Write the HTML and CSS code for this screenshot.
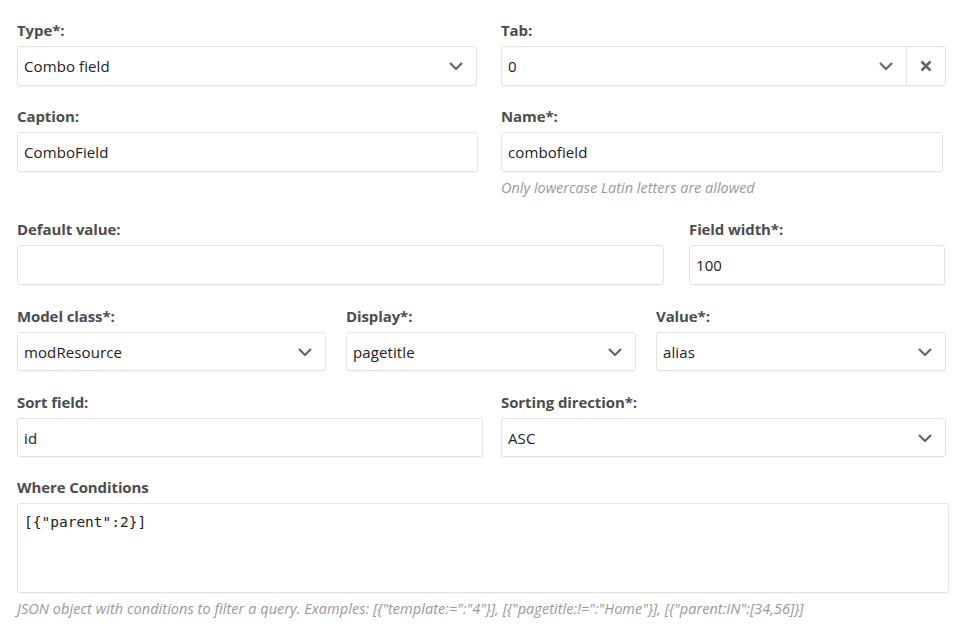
FILE: index.html
```html
<!DOCTYPE html>
<html>
<head>
<meta charset="utf-8">
<link rel="stylesheet" href="styles.css">
</head>
<body>
<div class="form">
  <div class="row row-a">
    <div class="field">
      <div class="label">Type*:</div>
      <div class="box select"><span class="val">Combo field</span><span class="trigger"><svg width="16" height="10" viewBox="0 0 16 10"><path d="M2 2 L8 8 L14 2" fill="none" stroke="#666" stroke-width="2.2"/></svg></span></div>
    </div>
    <div class="field">
      <div class="label">Tab:</div>
      <div class="box select"><span class="val">0</span><span class="trigger"><svg width="16" height="10" viewBox="0 0 16 10"><path d="M2 2 L8 8 L14 2" fill="none" stroke="#666" stroke-width="2.2"/></svg></span><span class="clear"><svg width="12" height="12" viewBox="0 0 12 12"><path d="M1.5 1.5 L10.5 10.5 M10.5 1.5 L1.5 10.5" stroke="#666" stroke-width="2.6"/></svg></span></div>
    </div>
  </div>
  <div class="row row-b">
    <div class="field">
      <div class="label">Caption:</div>
      <div class="box"><span class="val">ComboField</span></div>
    </div>
    <div class="field">
      <div class="label">Name*:</div>
      <div class="box"><span class="val">combofield</span></div>
      <div class="hint">Only lowercase Latin letters are allowed</div>
    </div>
  </div>
  <div class="row row-c">
    <div class="field">
      <div class="label">Default value:</div>
      <div class="box"><span class="val"></span></div>
    </div>
    <div class="field">
      <div class="label">Field width*:</div>
      <div class="box"><span class="val">100</span></div>
    </div>
  </div>
  <div class="row row-d">
    <div class="field">
      <div class="label">Model class*:</div>
      <div class="box select"><span class="val">modResource</span><span class="trigger"><svg width="16" height="10" viewBox="0 0 16 10"><path d="M2 2 L8 8 L14 2" fill="none" stroke="#666" stroke-width="2.2"/></svg></span></div>
    </div>
    <div class="field">
      <div class="label">Display*:</div>
      <div class="box select"><span class="val">pagetitle</span><span class="trigger"><svg width="16" height="10" viewBox="0 0 16 10"><path d="M2 2 L8 8 L14 2" fill="none" stroke="#666" stroke-width="2.2"/></svg></span></div>
    </div>
    <div class="field">
      <div class="label">Value*:</div>
      <div class="box select"><span class="val">alias</span><span class="trigger"><svg width="16" height="10" viewBox="0 0 16 10"><path d="M2 2 L8 8 L14 2" fill="none" stroke="#666" stroke-width="2.2"/></svg></span></div>
    </div>
  </div>
  <div class="row row-e">
    <div class="field">
      <div class="label">Sort field:</div>
      <div class="box"><span class="val">id</span></div>
    </div>
    <div class="field">
      <div class="label">Sorting direction*:</div>
      <div class="box select"><span class="val">ASC</span><span class="trigger"><svg width="16" height="10" viewBox="0 0 16 10"><path d="M2 2 L8 8 L14 2" fill="none" stroke="#666" stroke-width="2.2"/></svg></span></div>
    </div>
  </div>
  <div class="row row-f">
    <div class="field">
      <div class="label">Where Conditions</div>
      <div class="box area"><span class="code">[{"parent":2}]</span></div>
      <div class="hint">JSON object with conditions to filter a query. Examples: [{"template:=":"4"}], [{"pagetitle:!=":"Home"}], [{"parent:IN":[34,56]}]</div>
    </div>
  </div>
</div>
</body>
</html>
```

FILE: styles.css
```css
html, body {
  margin: 0;
  padding: 0;
  background: #ffffff;
}
body {
  font-family: "Open Sans", "Noto Sans", sans-serif;
  font-size: 15px;
  color: #333;
}
.form {
  padding: 20px 0 0 17px;
  display: flex;
  flex-direction: column;
}
.row {
  display: grid;
  column-gap: 24px;
}
.row-a { grid-template-columns: 460px 445px; }
.row-b { grid-template-columns: 461px 442px; column-gap: 23px; margin-top: 20px; }
.row-c { grid-template-columns: 647px 256px; column-gap: 25px; margin-top: 21px; }
.row-d { grid-template-columns: 309px 290px 290px; column-gap: 20px; margin-top: 21px; }
.row-e { grid-template-columns: 466px 445px; column-gap: 18px; margin-top: 21px; }
.row-f { grid-template-columns: 932px; margin-top: 20px; }
.label {
  font-weight: 700;
  color: #4d4d4d;
  line-height: 20px;
  height: 20px;
  margin-bottom: 6px;
  font-size: 15px;
  letter-spacing: -0.1px;
}
.box {
  height: 40px;
  box-sizing: border-box;
  border: 1px solid #e3e3e3;
  border-radius: 3px;
  box-shadow: 0 1px 1px rgba(0,0,0,0.04);
  display: flex;
  align-items: center;
  background: #fff;
}
.row-d .box, .row-e .box { height: 39px; }
.val {
  flex: 1;
  padding-left: 6px;
  color: #222;
  font-size: 15px;
  letter-spacing: 0.1px;
}
.trigger {
  width: 40px;
  height: 100%;
  display: flex;
  align-items: center;
  justify-content: center;
}
.clear {
  width: 38px;
  height: 100%;
  border-left: 1px solid #e3e3e3;
  display: flex;
  align-items: center;
  justify-content: center;
}
.area {
  height: 90px;
  align-items: flex-start;
}
.code {
  font-family: "DejaVu Sans Mono", "Liberation Mono", monospace;
  font-size: 14.5px;
  color: #222;
  padding: 10px 0 0 6px;
}
.hint {
  font-style: italic;
  color: #999;
  line-height: 20px;
  margin-top: 6px;
  font-size: 14.5px;
}
.row-f .hint {
  margin-top: 6px;
  font-size: 14.5px;
  letter-spacing: 0.05px;
}
```
